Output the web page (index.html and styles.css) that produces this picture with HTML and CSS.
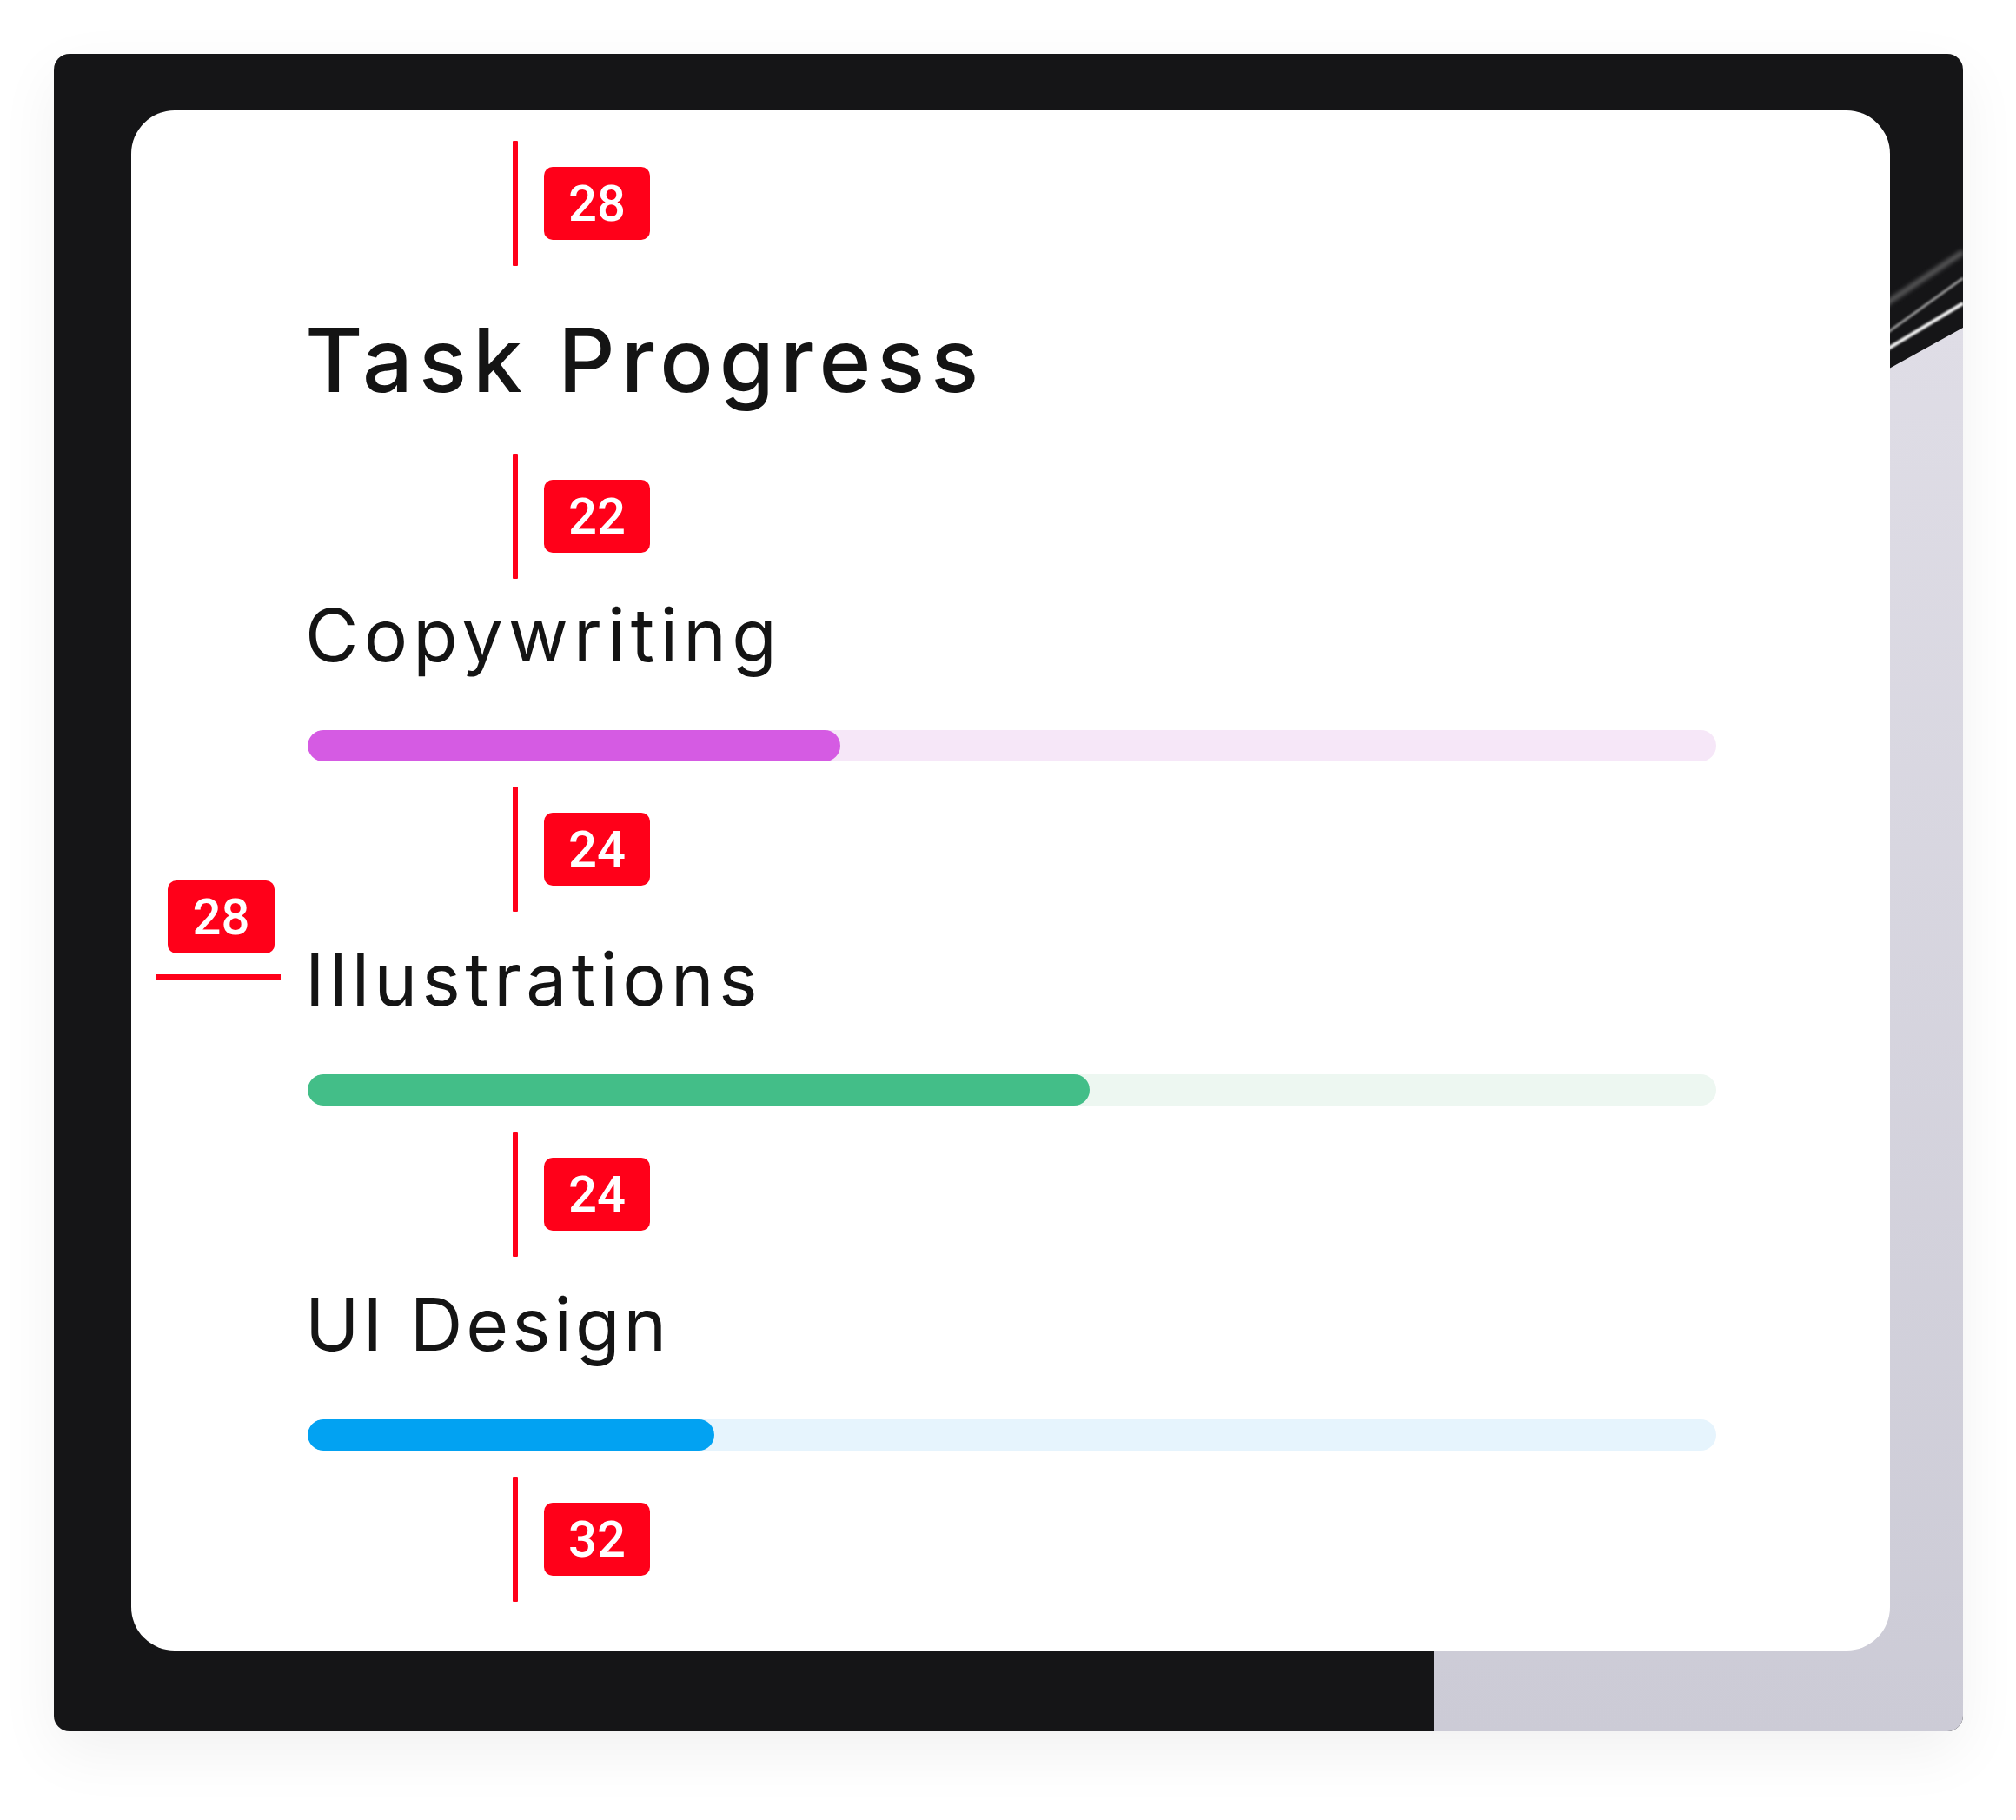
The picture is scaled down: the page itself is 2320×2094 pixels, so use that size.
FILE: index.html
```html
<!DOCTYPE html>
<html lang="en">
<head>
<meta charset="utf-8">
<title>Task Progress</title>
<link rel="stylesheet" href="styles.css">
</head>
<body>
<div class="frame">
  <svg class="backdrop" viewBox="0 0 2197 1930" preserveAspectRatio="none" aria-hidden="true">
    <defs>
      <linearGradient id="lav" x1="0" y1="0" x2="0" y2="1">
        <stop offset="0" stop-color="#dfdde6"/>
        <stop offset="1" stop-color="#cccbd6"/>
      </linearGradient>
      <filter id="soft" x="-20%" y="-200%" width="140%" height="500%">
        <feGaussianBlur stdDeviation="2.5"/>
      </filter>
      <filter id="softer" x="-20%" y="-200%" width="140%" height="500%">
        <feGaussianBlur stdDeviation="1"/>
      </filter>
    </defs>
    <polygon points="1588,1930 1588,1700 2000,424 2197,315 2197,1930" fill="url(#lav)"/>
    <line x1="2000" y1="360" x2="2197" y2="228" stroke="#8a8a8a" stroke-width="6" opacity="0.6" filter="url(#soft)"/>
    <line x1="2000" y1="400" x2="2197" y2="258" stroke="#a9a9a9" stroke-width="3" opacity="0.85" filter="url(#softer)"/>
    <line x1="2000" y1="406" x2="2197" y2="287" stroke="#f2f2f2" stroke-width="4" filter="url(#softer)"/>
  </svg>

  <div class="card">
    <div class="marker"><span class="marker-line"></span><span class="badge">28</span></div>

    <h1 class="title">Task Progress</h1>

    <div class="marker"><span class="marker-line"></span><span class="badge">22</span></div>

    <div class="task task-first">
      <div class="task-name task-name-wide">Copywriting</div>
      <div class="track track-purple"><div class="fill" style="width: 37.8%"></div></div>
    </div>

    <div class="marker"><span class="marker-line"></span><span class="badge">24</span></div>

    <div class="task">
      <div class="side-note">
        <span class="badge">28</span>
        <span class="side-line"></span>
      </div>
      <div class="task-name">Illustrations</div>
      <div class="track track-green"><div class="fill" style="width: 55.5%"></div></div>
    </div>

    <div class="marker"><span class="marker-line"></span><span class="badge">24</span></div>

    <div class="task">
      <div class="task-name task-name-tight">UI Design</div>
      <div class="track track-blue"><div class="fill" style="width: 28.9%"></div></div>
    </div>

    <div class="marker"><span class="marker-line"></span><span class="badge">32</span></div>
  </div>
</div>
</body>
</html>
```

FILE: styles.css
```css
* {
  box-sizing: border-box;
}

html, body {
  margin: 0;
  padding: 0;
  background: #ffffff;
}

body {
  width: 2320px;
  height: 2094px;
  overflow: hidden;
  font-family: "Inter", "Open Sans", "Liberation Sans", sans-serif;
  color: #141414;
}

.frame {
  position: relative;
  width: 2197px;
  margin: 62px 0 0 62px;
  padding: 65px 84px 93px 89px;
  background: #151517;
  border-radius: 18px;
  overflow: hidden;
  box-shadow: 0 24px 70px rgba(0, 0, 0, 0.06);
}

.backdrop {
  position: absolute;
  left: 0;
  top: 0;
  width: 100%;
  height: 100%;
}

.card {
  position: relative;
  z-index: 1;
  width: 2024px;
  background: #ffffff;
  border-radius: 50px;
  padding: 35px 0 56px 203px;
  display: flex;
  flex-direction: column;
}

/* spacing markers */
.marker {
  height: 144px;
  display: flex;
  align-items: center;
  padding-left: 236px;
}

.marker-line {
  width: 6px;
  height: 144px;
  background: #ff0019;
  border-radius: 1px;
}

.badge {
  display: flex;
  align-items: center;
  justify-content: center;
  width: 122px;
  height: 84px;
  background: #ff0019;
  border-radius: 10px;
  color: #ffffff;
  font-family: "Roboto", "Liberation Sans", sans-serif;
  font-size: 58px;
  font-weight: 500;
  line-height: 1;
}

.marker .badge {
  margin-left: 30px;
}

/* title */
.title {
  margin: 0 0 0 -3px;
  height: 216px;
  line-height: 216px;
  font-size: 102px;
  font-weight: 500;
  letter-spacing: 7px;
  color: #141414;
}

/* tasks */
.task {
  position: relative;
  width: 1621px;
  padding-bottom: 30px;
}

.task-first {
  padding-bottom: 29px;
}

.task-name {
  height: 155px;
  line-height: 155px;
  font-size: 84px;
  font-weight: 400;
  letter-spacing: 5.4px;
  color: #141414;
  margin-left: -3px;
}

.task-name-wide {
  letter-spacing: 6.3px;
}

.task-name-tight {
  letter-spacing: 4px;
}

.task-first .task-name {
  height: 130px;
  line-height: 130px;
}

.track {
  height: 36px;
  border-radius: 18px;
  margin-top: 32px;
  overflow: hidden;
}

.task-first .track {
  margin-top: 44px;
}

.fill {
  height: 100%;
  border-radius: 18px;
}

.track-purple { background: #f6e7f8; }
.track-purple .fill { background: #d55be3; }

.track-green { background: #edf7f1; }
.track-green .fill { background: #43be88; }

.track-blue { background: #e6f4fd; }
.track-blue .fill { background: #02a2f2; }

/* horizontal side annotation next to Illustrations */
.side-note {
  position: absolute;
  left: -175px;
  top: -36px;
  width: 144px;
  height: 114px;
}

.side-note .badge {
  position: absolute;
  left: 14px;
  top: 0;
  width: 123px;
}

.side-line {
  position: absolute;
  left: 0;
  top: 108px;
  width: 144px;
  height: 6px;
  background: #ff0019;
}
```
